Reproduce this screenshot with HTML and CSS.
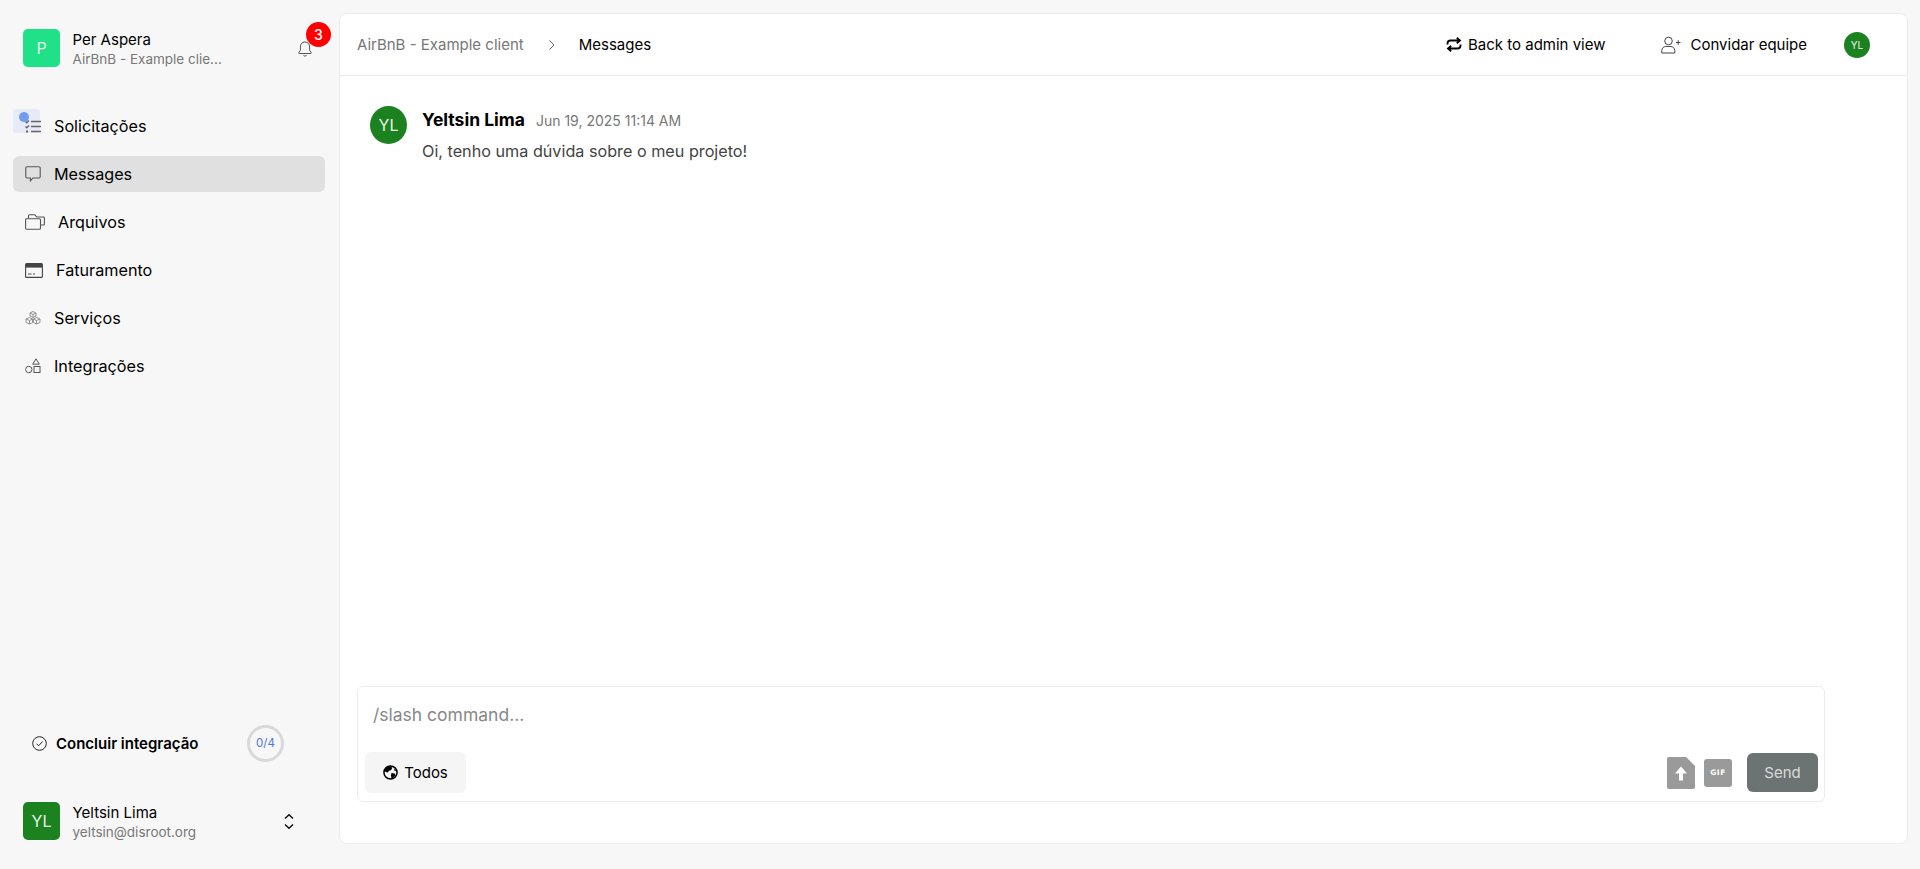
FILE: index.html
```html
<!DOCTYPE html>
<html lang="pt">
<head>
<meta charset="utf-8">
<title>Messages</title>
<link rel="stylesheet" href="styles.css">
</head>
<body>
<div class="app">
  <aside class="sidebar">
    <div class="brand">
      <div class="tile tile-green">P</div>
      <div class="who">
        <div class="who-name">Per Aspera</div>
        <div class="who-sub">AirBnB - Example clie...</div>
      </div>
      <div class="bell">
        <svg width="18" height="18" viewBox="0 0 18 18" fill="none" stroke="#555" stroke-width="1"><path d="M9 2c-3 0-4.600 2.200-4.600 5v3.200L2.800 12.800c-.2.400 0 .7.4.7h11.600c.4 0 .6-.3.4-.7l-1.600-2.600V7c0-2.800-1.600-5-4.600-5z"/><path d="M7.400 15.500c.8.700 2.400.7 3.200 0"/></svg>
        <span class="badge">3</span>
      </div>
    </div>
    <nav class="nav">
      <a class="nav-item">
        <span class="tour"><span class="tour-dot"></span></span>
        <svg class="ico" width="16" height="16" viewBox="0 0 16 16" fill="none" stroke="#666" stroke-width="1.300"><path d="M6 3.500h10M6 8.500h10M6 13.500h10" stroke-width="1.600"/><path d="M.5 3.500l1.300 1.300L4 2.500M.5 8.500l1.300 1.300L4 7.500"/><path d="M1 13.500h2" stroke-width="2"/></svg>
        <span>Solicitações</span>
      </a>
      <a class="nav-item active">
        <svg class="ico" width="16" height="16" viewBox="0 0 16 16" fill="none" stroke="#555" stroke-width="1.100"><path d="M2 .8h12c.7 0 1.200.5 1.200 1.200v8.800c0 .7-.5 1.200-1.200 1.200H8l-2.600 2.900V12H2c-.7 0-1.200-.5-1.200-1.200V2C.8 1.300 1.300.8 2 .8z"/></svg>
        <span>Messages</span>
      </a>
      <a class="nav-item">
        <svg class="ico" width="20" height="16" viewBox="0 0 20 16" fill="none" stroke="#555" stroke-width="1.100"><path d="M3.500 4.500V1.800C3.500 1.200 3.900.8 4.500.8h5.300l2 2.200h6.700c.5 0 .9.400.9.900v6.100c0 .6-.4 1-1 1H15.500"/><path d="M1.500 4.800H14.500c.6 0 1 .4 1 1v8.400c0 .6-.4 1-1 1H1.500c-.5 0-.9-.4-.9-.9V5.700c0-.5.4-.9.9-.9z"/></svg>
        <span>Arquivos</span>
      </a>
      <a class="nav-item">
        <svg class="ico" width="18" height="15" viewBox="0 0 18 15" fill="none"><rect x=".6" y=".6" width="16.800" height="13.800" rx="1" stroke="#444" stroke-width="1.100"/><rect x="1" y="1" width="16" height="3.600" fill="#444"/><path d="M3 11h3.500M8 11h2" stroke="#444"/></svg>
        <span>Faturamento</span>
      </a>
      <a class="nav-item">
        <svg class="ico" width="16" height="16" viewBox="0 0 16 16" fill="none" stroke="#888" stroke-width=".9"><path d="M8 1.500l3 1.500v3L8 7.500 5 6V3zM5 3l3 1.500L11 3M8 4.500V7.500"/><path d="M4.500 7.500l3 1.500v3.500l-3 1.500-3.500-1.500V9zM1 9l3.500 1.500L7.500 9M4.500 10.500V14"/><path d="M11.500 7.500l3.500 1.500v3.500L11.500 14l-3-1.500V9zM8.500 9l3 1.500L15 9M11.500 10.500V14"/></svg>
        <span>Serviços</span>
      </a>
      <a class="nav-item">
        <svg class="ico" width="16" height="16" viewBox="0 0 16 16" fill="none" stroke="#555" stroke-width="1"><path d="M11 .8l3.300 5.400H7.700z"/><circle cx="3.800" cy="11.500" r="3.200"/><rect x="9" y="8.500" width="6" height="6"/></svg>
        <span>Integrações</span>
      </a>
    </nav>
    <div class="onboard">
      <svg width="15" height="15" viewBox="0 0 15 15" fill="none" stroke="#222" stroke-width="1"><circle cx="7.500" cy="7.500" r="6.800"/><path d="M4.500 7.700l2.100 2.100 4-4.300"/></svg>
      <span class="onboard-text">Concluir integração</span>
      <span class="ring">0/4</span>
    </div>
    <div class="account">
      <div class="tile tile-dark">YL</div>
      <div class="who">
        <div class="who-name">Yeltsin Lima</div>
        <div class="who-sub">yeltsin@disroot.org</div>
      </div>
      <svg class="updown" width="12" height="17" viewBox="0 0 12 17" fill="none" stroke="#111" stroke-width="1.500"><path d="M2 5.500L6 1.800l4 3.700M2 11.500l4 3.700 4-3.700"/></svg>
    </div>
  </aside>

  <main class="panel">
    <header class="topbar">
      <span class="crumb">AirBnB - Example client</span>
      <svg class="crumb-sep" width="8" height="12" viewBox="0 0 8 12" fill="none" stroke="#666" stroke-width="1"><path d="M1.500 1.500L6 6l-4.500 4.500"/></svg>
      <span class="crumb-now">Messages</span>
      <a class="top-action back">
        <svg width="16" height="15" viewBox="0 0 16 15" fill="none" stroke="#000" stroke-width="1.800"><path d="M1.500 7.500V6.500C1.500 4.800 2.800 3.500 4.500 3.500H14M10.800 .8l3.200 2.700-3.200 2.700"/><path d="M14.500 7.500v1c0 1.700-1.300 3-3 3H2M5.200 8.800L2 11.500l3.200 2.700"/></svg>
        <span>Back to admin view</span>
      </a>
      <a class="top-action invite">
        <svg width="20" height="18" viewBox="0 0 20 18" fill="none" stroke="#444" stroke-width="1"><circle cx="7.500" cy="5" r="3.800"/><path d="M.8 17v-2.500c0-2.400 2-4 4-4h5c2 0 4 1.600 4 4V17z"/><path d="M15 6.500h4.500M17.200 4.200v4.600"/></svg>
        <span>Convidar equipe</span>
      </a>
      <span class="avatar-sm">YL</span>
    </header>
    <section class="feed">
      <div class="msg">
        <span class="avatar-md">YL</span>
        <div class="msg-body">
          <div class="msg-head"><strong class="msg-author">Yeltsin Lima</strong><span class="msg-date">Jun 19, 2025 11:14 AM</span></div>
          <p class="msg-text">Oi, tenho uma dúvida sobre o meu projeto!</p>
        </div>
      </div>
    </section>
    <form class="composer">
      <div class="placeholder">/slash command...</div>
      <div class="composer-bar">
        <button type="button" class="audience">
          <svg width="15" height="15" viewBox="0 0 16 16"><circle cx="8" cy="8" r="7" fill="none" stroke="#000" stroke-width="1.600"/><path d="M4 2.500l4-1 2 1.500-1.500 2.500L6 6 5.500 8 3 7.500 1.500 6zM9 8.500l3.500.5 1 2-3 3.500-1.500-.5L8.500 11zM11.500 3.500l2.500 2.500-1.500.5z" fill="#000"/></svg>
          <span>Todos</span>
        </button>
        <svg class="file-ico" width="28" height="32" viewBox="0 0 28 32"><path d="M2 0h17l9 9v21a2 2 0 0 1-2 2H2a2 2 0 0 1-2-2V2a2 2 0 0 1 2-2z" fill="#9a9a9a"/><path d="M14 9.500l-6 7h4v7h4v-7h4z" fill="#fff"/></svg>
        <span class="gif-ico">GIF</span>
        <button type="button" class="send">Send</button>
      </div>
    </form>
  </main>
</div>
</body>
</html>
```
FILE: styles.css
```css
* { box-sizing: border-box; }
html, body { margin: 0; height: 100%; }
body {
  background: #f7f7f7;
  color: #000;
  font-family: Inter, "Noto Sans", sans-serif;
  overflow: hidden;
}
.app { display: flex; height: 869px; }

/* sidebar */
.sidebar {
  width: 339px;
  flex: none;
  display: flex;
  flex-direction: column;
  padding: 29px 14px 29px 13px;
}
.brand, .account { display: flex; align-items: center; padding-left: 10px; height: 38px; }
.tile {
  width: 37px; height: 38px; flex: none;
  border-radius: 5px;
  color: #e6f6e6; font-size: 16px;
  display: flex; align-items: center; justify-content: center;
}
.tile-green { background: #20e088; }
.tile-dark { background: #1c821f; }
.who { margin-left: 12.500px; flex: 1; min-width: 0; padding-top: 2px; }
.who-name { font-size: 15px; line-height: 19px; }
.who-sub { font-size: 13.5px; line-height: 20px; color: #777; }
.bell { position: relative; width: 18px; height: 18px; margin-right: 11px; margin-top: 1px; }
.bell svg { display: block; }
.badge {
  position: absolute; left: 10px; top: -18px;
  width: 25px; height: 25px; border-radius: 50%;
  background: #ff0000; color: #fff;
  font-size: 14px; font-weight: 500;
  display: flex; align-items: center; justify-content: center;
}
.nav { display: flex; flex-direction: column; gap: 13px; margin-top: 41.400px; }
.nav-item {
  position: relative;
  display: flex; align-items: center; gap: 13px;
  height: 35.100px; padding-left: 12px;
  border-radius: 6px;
  font-size: 16.2px; color: #000;
}
.nav-item.active { background: #e0e0e0; }
.ico { flex: none; position: relative; }
.tour {
  position: absolute; left: 0; top: 1px;
  width: 27px; height: 24px; border-radius: 3px;
  background: #e6eaf9;
}
.tour-dot {
  position: absolute; left: 6px; top: 3px;
  width: 10px; height: 10px; border-radius: 50%;
  background: #6f9bf2;
}
.onboard {
  margin-top: auto;
  display: flex; align-items: center;
  height: 38px; padding-left: 19px;
}
.onboard-text { margin-left: 9px; font-size: 15px; font-weight: 600; width: 191px; flex: none; line-height: 17px; }
.ring {
  width: 37px; height: 37px; flex: none; border-radius: 50%;
  border: 3px solid #d9d9d9;
  display: flex; align-items: center; justify-content: center;
  font-size: 11.500px; color: #4a76e8;
}
.account { margin-top: 40px; }
.updown { margin-right: 30px; flex: none; }

/* main */
.panel {
  flex: 1; min-width: 0;
  margin: 13px 12px 25px 0;
  background: #fff;
  border: 1px solid #ececec;
  border-radius: 8px;
  display: flex; flex-direction: column;
}
.topbar {
  height: 62px; flex: none;
  display: flex; align-items: center;
  padding: 0 37px 0 17px;
  border-bottom: 1px solid #ececec;
  font-size: 15px;
}
.crumb { color: #777; }
.crumb-sep { margin-left: 24px; }
.crumb-now { margin-left: 23px; }
.top-action { display: flex; align-items: center; }
.back { margin-left: auto; gap: 6px; }
.invite { margin-left: 55px; gap: 10px; }
.avatar-sm {
  margin-left: 37px;
  width: 26px; height: 26px; border-radius: 50%;
  background: #1c821f; color: #e8f4e8; font-size: 10px;
  display: flex; align-items: center; justify-content: center;
}
.feed { flex: 1; padding: 30px 30px; }
.msg { display: flex; gap: 15px; }
.avatar-md {
  width: 37px; height: 38px; flex: none; border-radius: 50%;
  background: #1c821f; color: #e8f4e8; font-size: 16px;
  display: flex; align-items: center; justify-content: center;
}
.msg-head { display: flex; align-items: baseline; gap: 11px; line-height: 26px; height: 26px; margin-top: 1px; }
.msg-author { font-size: 17.500px; font-weight: 700; }
.msg-date { font-size: 14px; color: #777; }
.msg-text { margin: 7px 0 0; font-size: 16.2px; line-height: 22px; color: #444; }
.composer {
  flex: none;
  width: 1468px;
  height: 116px;
  margin: 0 0 41px 17px;
  border: 1px solid #ececec;
  border-radius: 6px;
  padding: 17px 6px 8px 7px;
  display: flex; flex-direction: column;
}
.placeholder { padding-left: 8px; font-size: 17.5px; line-height: 22px; color: #888; }
.composer-bar { margin-top: auto; display: flex; align-items: center; }
.audience {
  width: 101px; height: 41px; border: 0; border-radius: 6px;
  background: #f5f5f5; color: #000;
  font: 15px Inter, sans-serif;
  display: flex; align-items: center; justify-content: center; gap: 6px;
}
.file-ico { margin-left: auto; flex: none; }
.gif-ico {
  margin-left: 9px;
  width: 28px; height: 28px; border-radius: 3px;
  background: #9a9a9a; color: #fff;
  font: 800 7.500px "DejaVu Sans", sans-serif; letter-spacing: .5px;
  display: flex; align-items: center; justify-content: center;
}
.send {
  margin-left: 15px;
  width: 71px; height: 39px; border: 0; border-radius: 6px;
  background: #6b7373; color: #d8dcdc;
  font: 15px Inter, sans-serif;
}
```
